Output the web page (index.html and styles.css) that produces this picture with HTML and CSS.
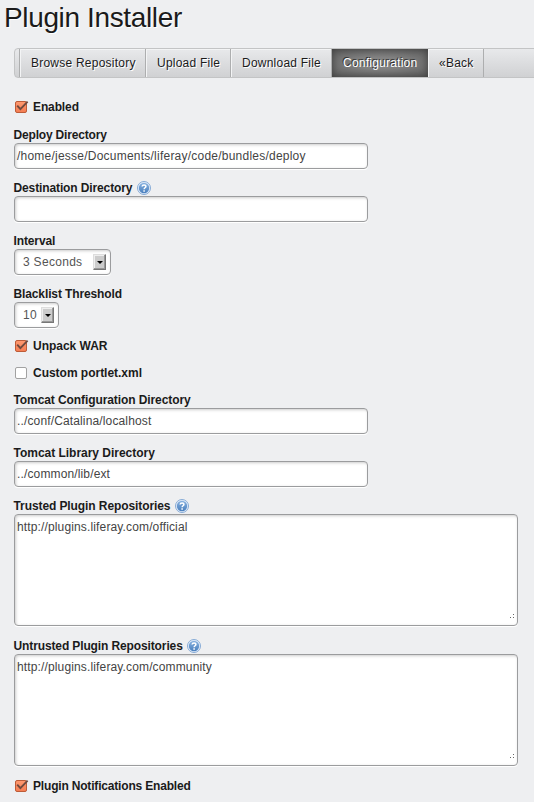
FILE: index.html
```
<!DOCTYPE html>
<html lang="en">
<head>
<meta charset="utf-8">
<title>Plugin Installer</title>
<link rel="stylesheet" href="styles.css">
</head>
<body>
<svg class="defs" width="0" height="0" aria-hidden="true">
  <defs>
    <linearGradient id="orange" x1="0" y1="0" x2="0" y2="1"><stop offset="0" stop-color="#ff9a70"/><stop offset="1" stop-color="#f47c52"/></linearGradient>
    <linearGradient id="blue" x1="0" y1="0" x2="0" y2="1"><stop offset="0" stop-color="#88b2e0"/><stop offset="1" stop-color="#4b80be"/></linearGradient>
    <symbol id="checked" viewBox="0 0 16 14">
      <rect x="1.5" y="1.5" width="11" height="11" rx="1.5" fill="url(#orange)" stroke="#bd5c38"/>
      <path d="M3.2 5.6 6.4 9.2 13.6 1.6" fill="none" stroke="#714a3e" stroke-width="1.9"/>
    </symbol>
    <symbol id="unchecked" viewBox="0 0 16 14">
      <rect x="1.5" y="1.5" width="11" height="11" rx="1.5" fill="#fff" stroke="#a2a2a2"/>
    </symbol>
    <symbol id="help" viewBox="0 0 14 14">
      <circle cx="7" cy="7" r="6.5" fill="#e5eefa" stroke="#86aad6"/>
      <circle cx="7" cy="7" r="5.2" fill="url(#blue)"/>
      <path d="M5.1 5.5C5.2 3.4 8.9 3.4 8.9 5.5 8.9 6.8 7.1 6.7 7.1 8.2M7.1 9.3v1.4" fill="none" stroke="#fff" stroke-width="1.5"/>
    </symbol>
    <symbol id="grip" viewBox="0 0 5 5">
      <path d="M3 0h1v1H3zM0 3h1v1H0zM3 3h1v1H3z" fill="#666"/>
    </symbol>
  </defs>
</svg>
<h1 class="title">Plugin Installer</h1>
<nav class="tabs">
  <a class="tab repository">Browse Repository</a>
  <a class="tab upload">Upload File</a>
  <a class="tab download">Download File</a>
  <a class="tab configuration active">Configuration</a>
  <a class="tab back">«Back</a>
</nav>
<form class="form">
  <div class="check"><svg class="box"><use href="#checked"/></svg><span>Enabled</span></div>
  <div class="field"><div class="label tight"><span>Deploy Directory</span></div><div class="input spaced">/home/jesse/Documents/liferay/code/bundles/deploy</div></div>
  <div class="field"><div class="label"><span>Destination Directory</span><svg class="help"><use href="#help"/></svg></div><div class="input"></div></div>
  <div class="field"><div class="label"><span>Interval</span></div><div class="select wide"><span>3 Seconds</span><i class="arrow"></i></div></div>
  <div class="field before-check"><div class="label"><span>Blacklist Threshold</span></div><div class="select narrow"><span>10</span><i class="arrow"></i></div></div>
  <div class="check close loose"><svg class="box"><use href="#checked"/></svg><span>Unpack WAR</span></div>
  <div class="check close loose"><svg class="box"><use href="#unchecked"/></svg><span>Custom portlet.xml</span></div>
  <div class="field"><div class="label medium"><span>Tomcat Configuration Directory</span></div><div class="input">../conf/Catalina/localhost</div></div>
  <div class="field"><div class="label loose"><span>Tomcat Library Directory</span></div><div class="input">../common/lib/ext</div></div>
  <div class="field large"><div class="label medium"><span>Trusted Plugin Repositories</span><svg class="help"><use href="#help"/></svg></div><div class="area"><span>http://plugins.liferay.com/official</span><svg class="grip"><use href="#grip"/></svg></div></div>
  <div class="field large"><div class="label"><span>Untrusted Plugin Repositories</span><svg class="help"><use href="#help"/></svg></div><div class="area"><span>http://plugins.liferay.com/community</span><svg class="grip"><use href="#grip"/></svg></div></div>
  <div class="check tight"><svg class="box"><use href="#checked"/></svg><span>Plugin Notifications Enabled</span></div>
</form>
</body>
</html>
```
FILE: styles.css
```
* { box-sizing: border-box; }
html { overflow: hidden; }
body { margin: 0; height: 802px; overflow: hidden; background: #eeeff1; color: #1b1b1b; font: 12px/16px "Liberation Sans", sans-serif; }
.defs { position: absolute; }
.title { margin: 0; padding: 2px 0 0 4px; height: 48px; font-size: 28px; line-height: 32px; font-weight: 400; letter-spacing: -.36px; text-shadow: 1px 1px #fff; white-space: nowrap; }
.tabs { display: flex; height: 30px; margin-left: 14px; padding-left: 4px; width: 540px; border: 1px solid #c3c4c5; border-radius: 4px; background: linear-gradient(#e8e9eb, #d0d1d3); letter-spacing: .23px; }
.tab { flex: none; padding-left: 11px; line-height: 28px; border-right: 1px solid #adaeaf; box-shadow: inset 1px 1px #f3f4f5; text-shadow: 1px 1px #fff; white-space: nowrap; }
.repository { width: 127px; border-left: 1px solid #adaeaf; }
.upload { width: 85px; }
.download { width: 101px; }
.configuration { width: 96px; }
.back { width: 56px; }
.tab.active { border: 0; color: #fff; background: radial-gradient(ellipse farthest-corner, #858585 25%, #606060); box-shadow: inset 0 0 9px #3c3c3c; text-shadow: -1px -1px #333; }
.form { margin: 0; padding: 21px 0 0 14px; }
.check, .label { display: flex; align-items: center; height: 16px; font-weight: 700; letter-spacing: -.12px; white-space: nowrap; }
.label { margin-left: -.5px; }
.label.tight, .check.tight { letter-spacing: -.18px; }
.label.medium { letter-spacing: -.09px; }
.label.loose, .check.loose { letter-spacing: -.02px; }
.check { margin-bottom: 12px; }
.check.close { margin-bottom: 11px; }
.box { width: 16px; height: 14px; margin-right: 3px; flex: none; }
.field { margin-bottom: 11px; }
.field.before-check { margin-bottom: 10px; }
.field.large { margin-bottom: 12px; }
.help { width: 14px; height: 14px; margin-left: 4.5px; flex: none; }
.input, .select, .area { border: 1px solid #9b9c9e; border-radius: 4px; background: #fff; box-shadow: inset 1px 1px 3px #ccc, 0 1px #fff; color: #444; letter-spacing: .14px; white-space: nowrap; }
.input { width: 354px; height: 26px; padding: 4px 2px; }
.input.spaced { letter-spacing: .23px; }
.select { display: flex; align-items: center; height: 26px; padding: 0 4px 0 8px; justify-content: space-between; color: #555; letter-spacing: .3px; }
.wide { width: 97px; }
.narrow { width: 45px; }
.arrow { display: flex; align-items: center; justify-content: center; width: 13px; height: 16px; background: #ccc; border: 1px solid; border-color: #ddd #777 #777 #ddd; box-shadow: inset -1px -1px #999, inset 1px 1px #eee; }
.arrow::before { content: ""; border: 3px solid transparent; border-top: 3px solid #000; border-bottom: 0; }
.area { display: flex; justify-content: space-between; width: 504px; height: 112px; padding: 4px 2px; }
.grip { align-self: flex-end; width: 5px; height: 5px; margin-bottom: 2px; }
```
